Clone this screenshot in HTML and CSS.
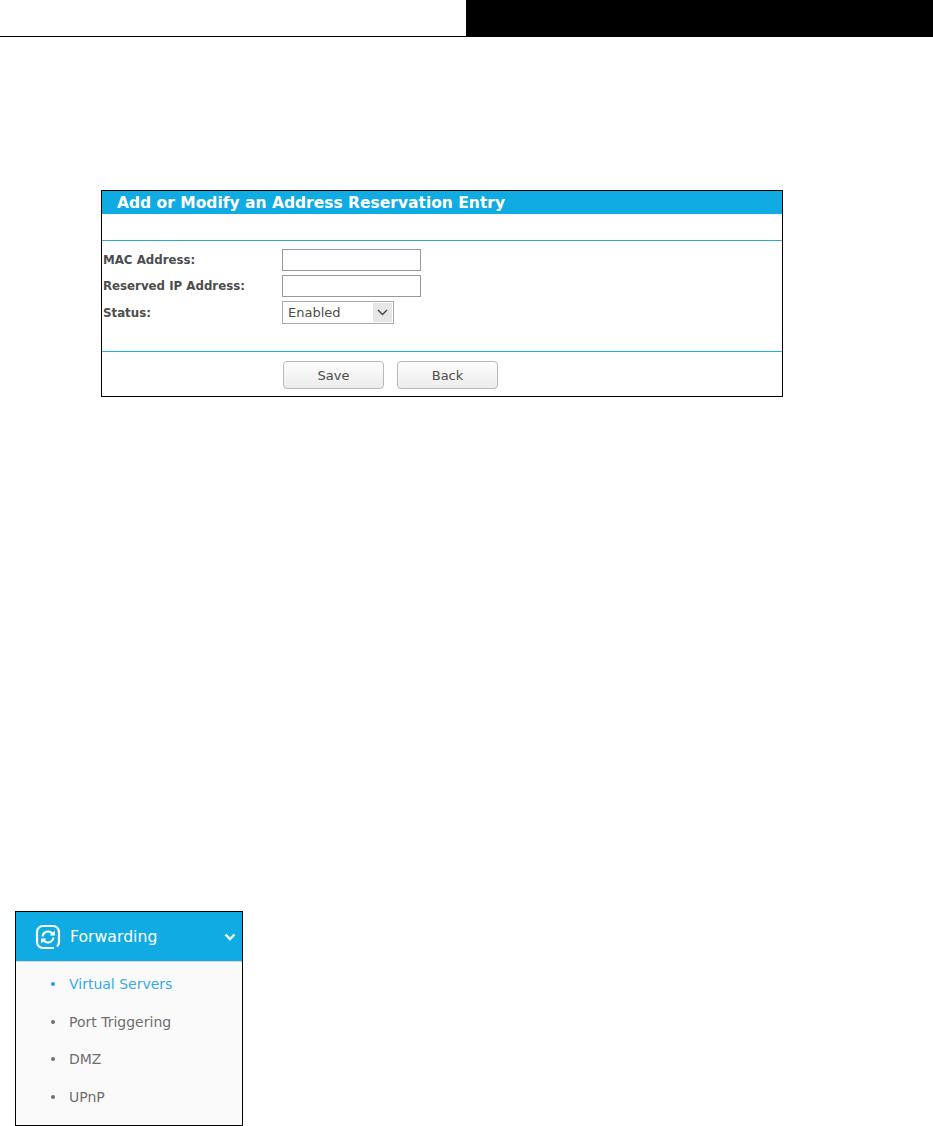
FILE: index.html
```html
<!DOCTYPE html>
<html lang="en">
<head>
  <meta charset="UTF-8" />
  <title>Address Reservation</title>
  <link rel="stylesheet" href="styles.css">
</head>
<body>
  <header class="page-head">
    <div class="head-black"></div>
  </header>

  <div class="panel">
    <h2 class="panel-title">Add or Modify an Address Reservation Entry</h2>
    <div class="panel-gap"></div>
    <div class="form-rows">
      <div class="form-row">
        <label>MAC Address:</label>
        <input type="text" class="text-box" />
      </div>
      <div class="form-row">
        <label>Reserved IP Address:</label>
        <input type="text" class="text-box" />
      </div>
      <div class="form-row">
        <label>Status:</label>
        <div class="fake-select">
          <span>Enabled</span>
          <span class="select-arrow">
            <svg width="11" height="7" viewBox="0 0 11 7"><path d="M1 1l4.5 4.5L10 1" fill="none" stroke="#444" stroke-width="1.4"/></svg>
          </span>
        </div>
      </div>
    </div>
    <div class="button-row">
      <button class="btn">Save</button>
      <button class="btn">Back</button>
    </div>
  </div>

  <nav class="side-menu">
    <div class="menu-head">
      <svg class="menu-icon" width="26" height="26" viewBox="0 0 26 26" fill="none" stroke="#fff">
        <path d="M19 24H8a6 6 0 0 1-6-6V8a6 6 0 0 1 6-6h10a6 6 0 0 1 6 6v10a6 6 0 0 1-2 4.500" stroke-width="2.200"/>
        <path d="M7.500 12.500a5.600 5.600 0 0 1 9.800-3M18.500 13.500a5.600 5.600 0 0 1-9.800 3" stroke-width="2"/>
        <path d="M14.500 11.500h5.500v-5zM11.500 14.500h-5.500v5z" fill="#fff" stroke="none"/>
      </svg>
      <span class="menu-title">Forwarding</span>
      <svg class="menu-chevron" width="12" height="8" viewBox="0 0 12 8"><path d="M1.500 1.500L6 6l4.500-4.500" fill="none" stroke="#fff" stroke-width="2.400"/></svg>
    </div>
    <ul class="menu-list">
      <li class="active">Virtual Servers</li>
      <li>Port Triggering</li>
      <li>DMZ</li>
      <li>UPnP</li>
    </ul>
  </nav>
</body>
</html>
```

FILE: styles.css
```css
body {
  margin: 0;
  background: #fff;
  font-family: "DejaVu Sans", Verdana, sans-serif;
  color: #4d4d4d;
}
.page-head {
  display: flex;
  justify-content: flex-end;
  height: 36px;
  border-bottom: 1px solid #000;
}
.head-black {
  width: 467px;
  height: 37px;
  background: #000;
}
.panel {
  width: 680px;
  height: 205px;
  margin: 153px 0 0 101px;
  border: 1px solid #000;
  display: flex;
  flex-direction: column;
}
.panel-title {
  margin: 0;
  height: 23px;
  padding-left: 15px;
  background: #0fabe2;
  color: #fff;
  font-size: 15.500px;
  line-height: 24px;
  font-weight: bold;
  white-space: nowrap;
}
.panel-gap {
  height: 26px;
  border-bottom: 1px solid #2fa8d8;
}
.form-rows {
  height: 111px;
  padding-top: 8px;
  box-sizing: border-box;
  border-bottom: 1px solid #1fb0e6;
  display: flex;
  flex-direction: column;
  gap: 4px;
}
.form-row {
  display: flex;
  align-items: center;
  padding-left: 1px;
}
.form-row label {
  width: 179px;
  font-size: 11.800px;
  font-weight: bold;
  white-space: nowrap;
}
.text-box {
  width: 139px;
  height: 22px;
  box-sizing: border-box;
  margin: 0;
  padding: 0;
  border: 1px solid #999;
  background: #fff;
}
.fake-select {
  width: 112px;
  height: 23px;
  box-sizing: border-box;
  border: 1px solid #aaa;
  padding-left: 5px;
  display: flex;
  align-items: center;
  justify-content: space-between;
  font-size: 13px;
}
.select-arrow {
  width: 19px;
  height: 19px;
  margin-right: 1px;
  background: #e6e6e6;
  display: flex;
  align-items: center;
  justify-content: center;
}
.button-row {
  display: flex;
  gap: 13px;
  padding: 9px 0 0 181px;
}
.btn {
  width: 101px;
  height: 28px;
  margin: 0;
  padding: 0;
  border: 1px solid #b9b9b9;
  border-radius: 4px;
  background: linear-gradient(#fdfdfd, #ececec);
  color: #4d4d4d;
  font-family: "DejaVu Sans", Verdana, sans-serif;
  font-size: 13px;
}
.side-menu {
  width: 226px;
  height: 213px;
  margin: 514px 0 0 15px;
  border: 1px solid #000;
  background: #fafafa;
}
.menu-head {
  height: 49px;
  background: #0fabe2;
  border-bottom: 1px solid #d8d8d8;
  display: flex;
  align-items: center;
  padding: 0 6px 0 19px;
  color: #fff;
}
.menu-icon {
  flex: none;
}
.menu-title {
  flex: 1;
  margin-left: 9px;
  font-size: 15.700px;
}
.menu-list {
  list-style: none;
  margin: 0;
  padding: 0 0 0 35px;
  font-size: 14px;
  color: #6f6f6f;
}
.menu-list li {
  height: 37.500px;
  line-height: 45px;
  padding-left: 18px;
  position: relative;
}
.menu-list li::before {
  content: "";
  position: absolute;
  left: 0;
  top: 20px;
  width: 4px;
  height: 4px;
  border-radius: 50%;
  background: #6f6f6f;
}
.menu-list li.active {
  color: #38a9e4;
}
.menu-list li.active::before {
  background: #1f9fde;
}
```
